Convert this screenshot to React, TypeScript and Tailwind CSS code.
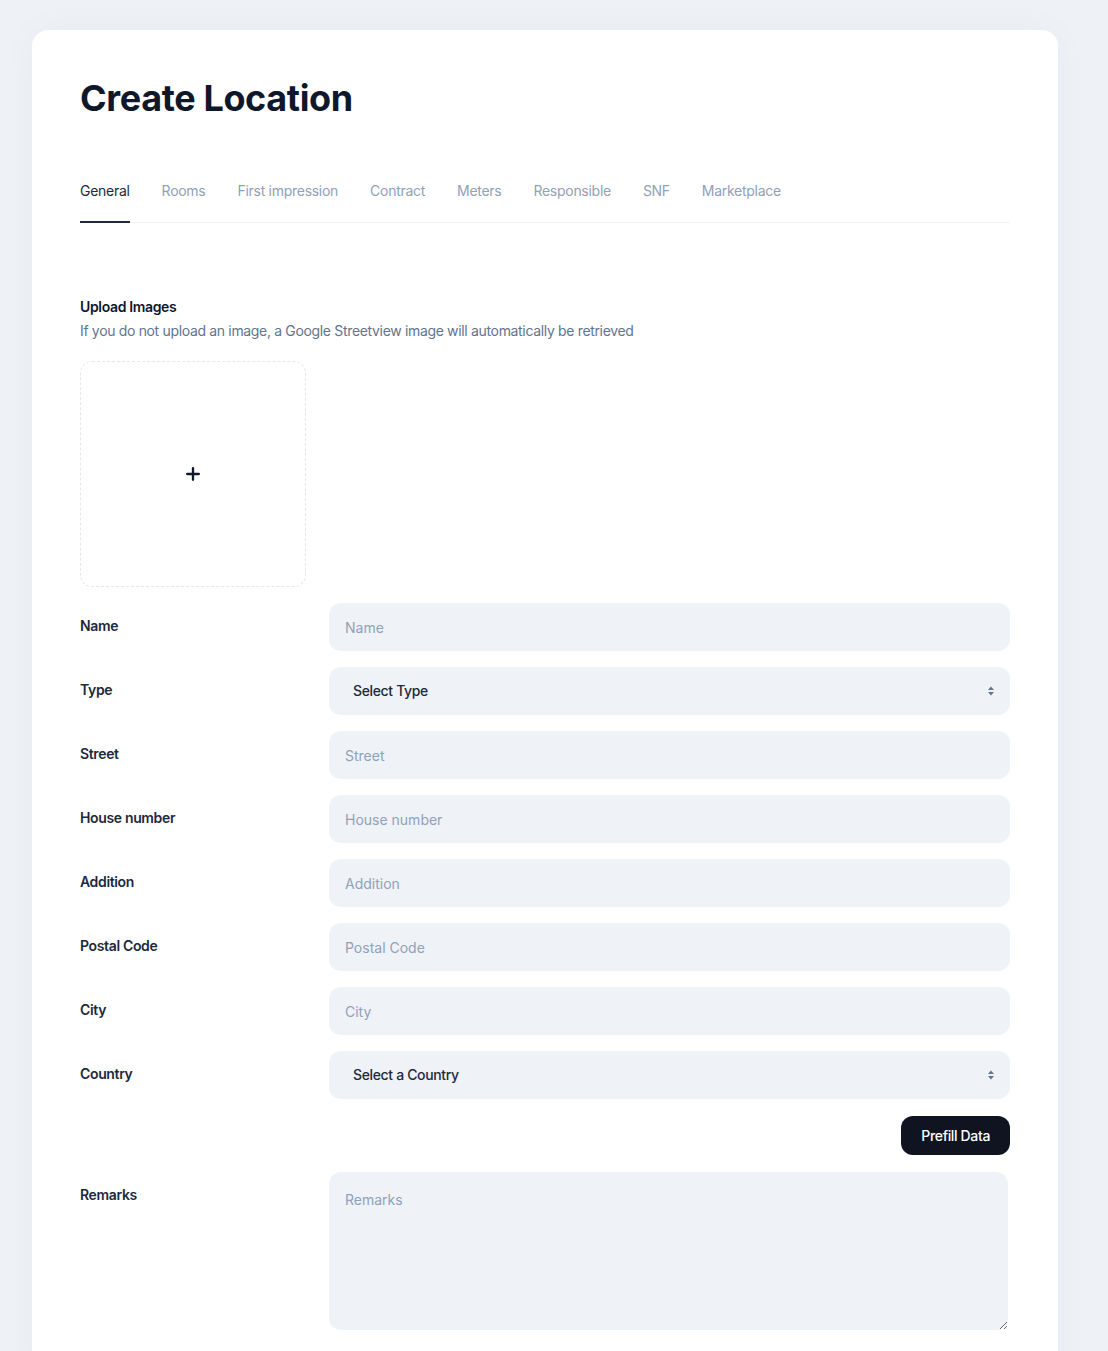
import { Plus } from "lucide-react"

const tabs = ["General", "Rooms", "First impression", "Contract", "Meters", "Responsible", "SNF", "Marketplace"]

type Field = { label: string; kind: "input" | "select"; placeholder: string }

const fields: Field[] = [
  { label: "Name", kind: "input", placeholder: "Name" },
  { label: "Type", kind: "select", placeholder: "Select Type" },
  { label: "Street", kind: "input", placeholder: "Street" },
  { label: "House number", kind: "input", placeholder: "House number" },
  { label: "Addition", kind: "input", placeholder: "Addition" },
  { label: "Postal Code", kind: "input", placeholder: "Postal Code" },
  { label: "City", kind: "input", placeholder: "City" },
  { label: "Country", kind: "select", placeholder: "Select a Country" },
]

function SelectArrows() {
  return (
    <svg width="8" height="12" viewBox="0 0 8 12" className="text-slate-500">
      <path d="M4 1.5 L7 5 H1 Z" fill="currentColor" />
      <path d="M4 10.5 L7 7 H1 Z" fill="currentColor" />
    </svg>
  )
}

export default function App() {
  return (
    <div className="min-h-screen bg-[#eef2f6] pl-8 pr-[50px] pt-[30px] font-['Inter',sans-serif]">
      <div className="bg-white rounded-2xl px-12 pt-12 pb-16 shadow-[0_0_40px_rgba(15,23,42,0.03)]">
        {/* Header */}
        <h1 className="text-4xl font-bold text-slate-900 tracking-[-0.01em]">Create Location</h1>

        {/* Tabs */}
        <div className="mt-[63px] flex gap-8 border-b border-slate-100">
          {tabs.map((t, i) => (
            <button
              key={t}
              className={
                i === 0
                  ? "pb-5 -mb-px border-b-2 border-slate-800 text-sm text-slate-800 tracking-[-0.02em]"
                  : "pb-5 -mb-px border-b-2 border-transparent text-sm text-slate-400 tracking-[-0.02em]"
              }
            >
              {t}
            </button>
          ))}
        </div>

        {/* Upload */}
        <div className="mt-[74px]">
          <div className="text-sm font-semibold text-slate-900 tracking-tight">Upload Images</div>
          <p className="mt-1 text-sm text-slate-500 tracking-[-0.024em]">
            If you do not upload an image, a Google Streetview image will automatically be retrieved
          </p>
          <div className="mt-5 w-[226px] h-[226px] rounded-xl border border-dashed border-slate-200 flex items-center justify-center">
            <Plus className="w-5 h-5 text-slate-900" strokeWidth={2.75} />
          </div>
        </div>

        {/* Form */}
        <div className="mt-4 flex flex-col gap-4">
          {fields.map((f) => (
            <div key={f.label} className="flex">
              <label className="w-[249px] shrink-0 pt-[13px] text-sm font-semibold text-slate-800 tracking-tight">
                {f.label}
              </label>
              {f.kind === "input" ? (
                <input
                  placeholder={f.placeholder}
                  className="flex-1 h-12 rounded-xl bg-[#eff2f7] px-4 text-sm text-slate-800 placeholder:text-slate-400 outline-none"
                />
              ) : (
                <div className="flex-1 h-12 rounded-xl bg-[#eff2f7] pl-6 pr-[15px] flex items-center justify-between">
                  <span className="text-sm font-medium text-slate-800 tracking-tight">{f.placeholder}</span>
                  <SelectArrows />
                </div>
              )}
            </div>
          ))}

          <div className="flex justify-end">
            <button className="mt-px h-[39px] px-5 rounded-xl bg-[#0f1420] text-white text-sm font-medium tracking-tight">
              Prefill Data
            </button>
          </div>

          <div className="flex mt-px">
            <label className="w-[249px] shrink-0 pt-[13px] text-sm font-semibold text-slate-800 tracking-tight">
              Remarks
            </label>
            <textarea
              placeholder="Remarks"
              className="flex-1 mr-[2px] h-[158px] rounded-xl bg-[#eff2f7] px-4 py-[18px] text-sm text-slate-800 placeholder:text-slate-400 outline-none resize-y"
            />
          </div>
        </div>
      </div>
    </div>
  )
}
